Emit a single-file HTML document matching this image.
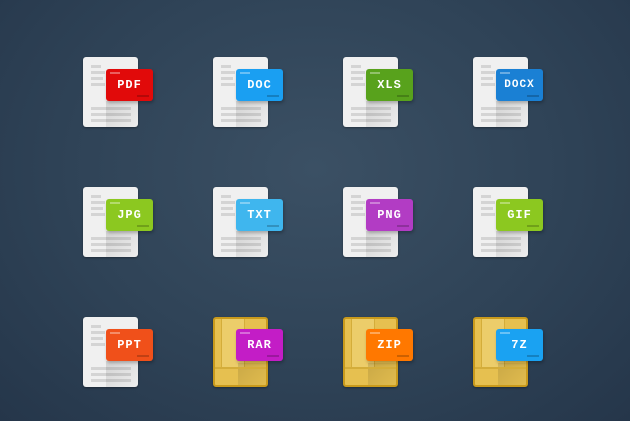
<!DOCTYPE html><html><head><style>
body{margin:0;width:630px;height:421px;overflow:hidden;background:radial-gradient(ellipse at 50% 40%,#3b5064 0%,#2f4357 55%,#25364a 100%);font-family:"Liberation Mono",monospace;}
.i{position:absolute;width:55px;height:70px}
.d{position:absolute;left:0;top:0;width:55px;height:70px;border-radius:3px;background:#f0f0f0;box-shadow:0 1px 2px rgba(0,0,0,.35);overflow:hidden}
.d i{position:absolute;left:8px;height:3px;background:#d4d4d4}
.a{background:#e6c050;border:2px solid #c99a1c;box-sizing:border-box}
.a:before{content:"";position:absolute;left:6px;top:0;width:22px;height:50px;background:#eccd6a;border-left:1px solid #d4ad3a;border-right:1px solid #d4ad3a}
.a:after{content:"";position:absolute;left:0;bottom:6px;width:51px;height:10px;border-top:2px solid #d4ad3a}
.sh{position:absolute;left:23px;top:44px;width:50px;height:40px;background:linear-gradient(135deg,rgba(0,0,0,.12),rgba(0,0,0,0) 70%)}
.b{position:absolute;left:23px;top:12px;width:47px;height:32px;border-radius:3px;color:#fff;font-weight:bold;font-size:12px;line-height:33px;text-align:center;letter-spacing:1px;box-shadow:1px 2px 3px rgba(0,0,0,.25)}
.b:before{content:"";position:absolute;left:4px;top:3px;width:10px;height:2px;background:rgba(255,255,255,.35)}
.b:after{content:"";position:absolute;right:4px;bottom:4px;width:12px;height:2px;background:rgba(0,0,0,.2)}
</style></head><body>
<div id="w"></div>
<script>
var L=[["PDF","#e10a0a"],["DOC","#1a9ff2"],["XLS","#58a21c"],["DOCX","#1a80d4"],["JPG","#8cc820"],["TXT","#3fb6ee"],["PNG","#b23cc4"],["GIF","#8cc820"],["PPT","#f0501a"],["RAR","#c31dc6"],["ZIP","#ff7800"],["7Z","#1aa2f2"]];
var h="";
L.forEach(function(e,k){var c=k%4,r=Math.floor(k/4);var x=83+c*130,y=57+r*130;var arch=k>=9;
h+='<div class="i" style="left:'+x+'px;top:'+y+'px"><div class="d'+(arch?' a':'')+'">';
if(!arch){h+='<i style="top:8px;width:10px"></i><i style="top:14px;width:14px"></i><i style="top:20px;width:12px"></i><i style="top:26px;width:14px"></i><i style="top:50px;width:40px"></i><i style="top:56px;width:40px"></i><i style="top:62px;width:40px"></i>';}
h+='<div class="sh"></div></div><div class="b" style="background:'+e[1]+';font-size:'+(e[0].length>3?11:12)+'px">'+e[0]+'</div></div>';});
document.getElementById("w").innerHTML=h;
</script></body></html>
